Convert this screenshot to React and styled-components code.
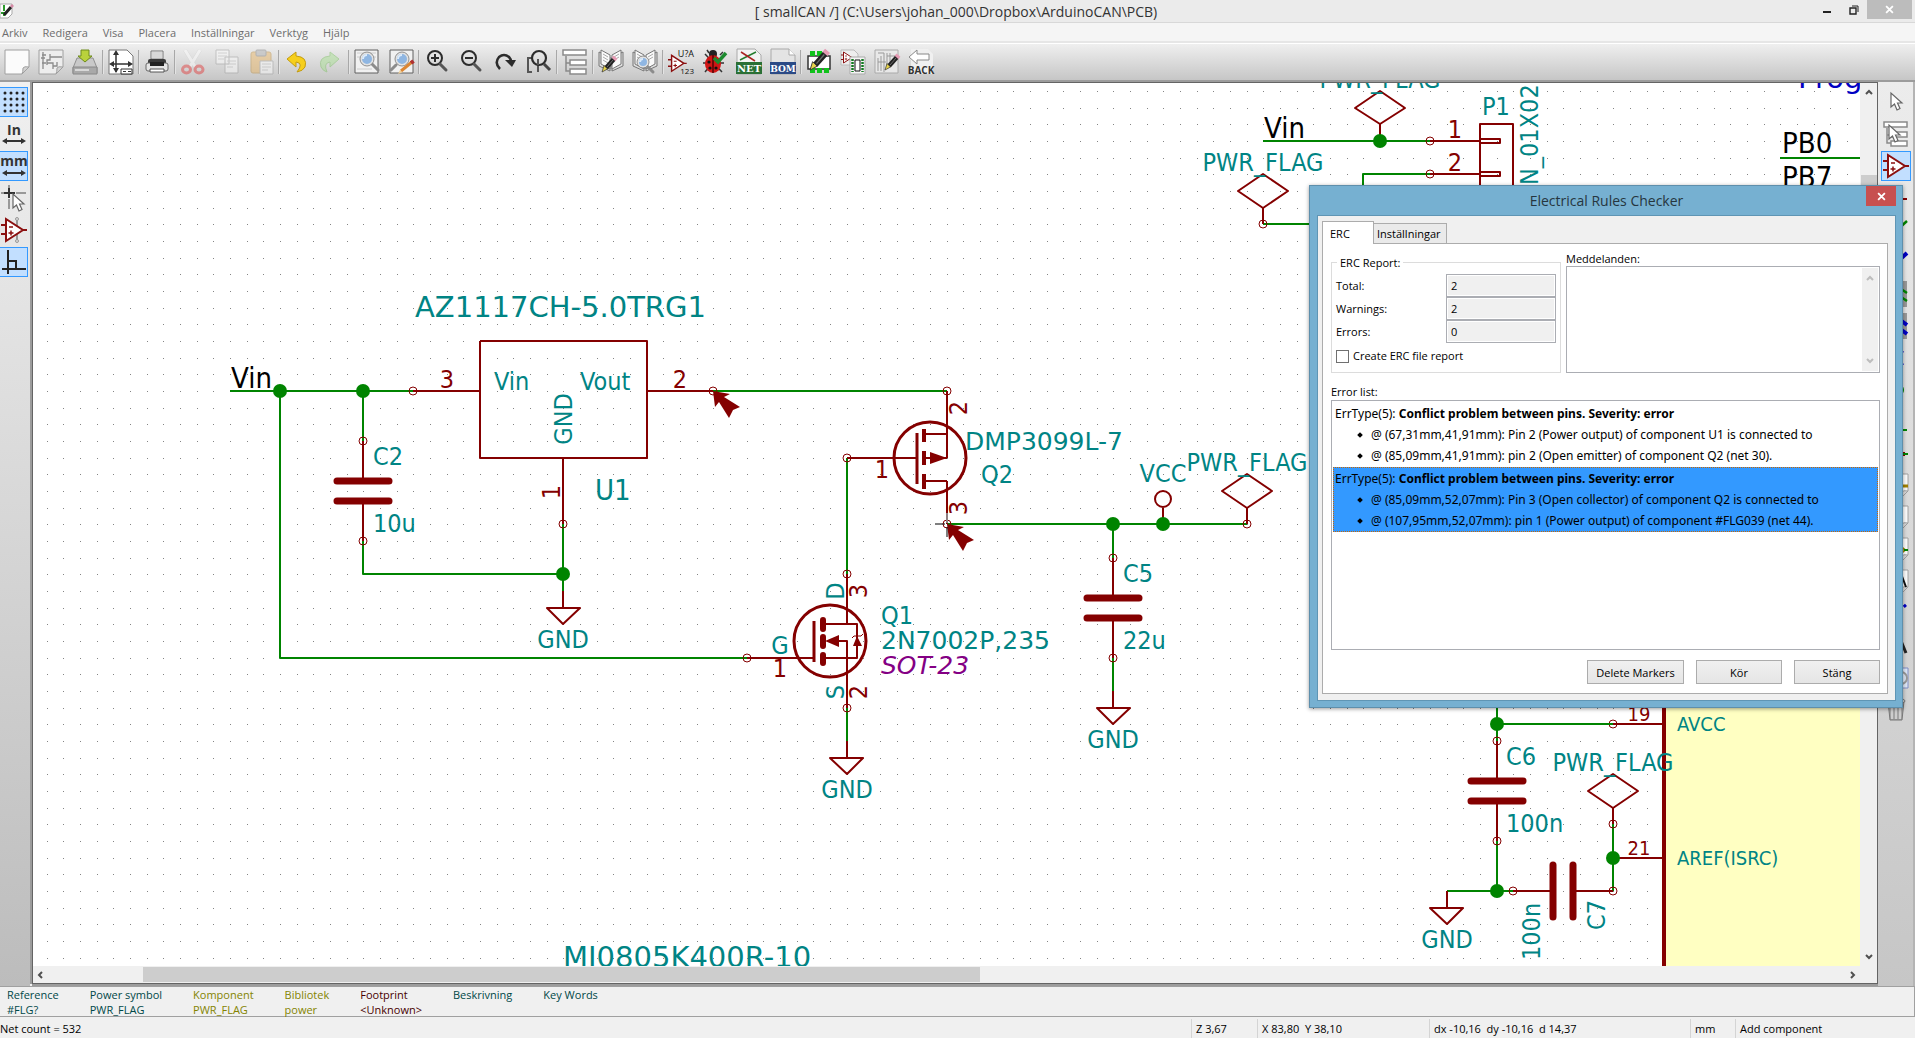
import React from "react";
import styled, { createGlobalStyle, css } from "styled-components";

const UI_FONT = `"Open Sans", "Noto Sans", sans-serif`;
const RED = "#840000";
const GREEN = "#008400";
const TEAL = "#008484";

const GlobalStyle = createGlobalStyle`
	* {
		box-sizing: border-box;
	}
	body {
		margin: 0;
		overflow: hidden;
		background: #f0f0f0;
		font-family: ${UI_FONT};
		font-size: 11px;
		color: #000;
	}
	button, input, textarea {
		font: inherit;
		color: inherit;
		margin: 0;
	}
`;

/* ---------- window frame ---------- */

const Window = styled.div`
	position: relative;
	display: flex;
	flex-direction: column;
	height: 100vh;
`;

const TitleBar = styled.header`
	display: grid;
	grid-template-columns: 1fr auto 1fr;
	height: 23px;
	padding-right: 3px;
	background: #ebebeb;
	border-bottom: 1px solid #d8d8d8;
`;

const Title = styled.h1`
	margin: 0;
	font-size: 14px;
	line-height: 23px;
	font-weight: 400;
	color: #333;
	white-space: pre;
`;

const WindowButtons = styled.div`
	display: flex;
	justify-content: flex-end;
`;

const WindowButton = styled.button`
	width: ${({ $wide }) => ($wide ? 45 : 27)}px;
	height: 19px;
	padding: 0;
	border: 0;
	display: flex;
	align-items: center;
	justify-content: center;
	background: ${({ $wide }) => ($wide ? "#bcbcbc" : "transparent")};
`;

const MenuBar = styled.nav`
	display: flex;
	gap: 15px;
	height: 20px;
	padding-left: 2px;
	background: #f5f5f5;
	border-bottom: 2px solid #e6e6e6;
`;

const MenuItem = styled.a`
	font-size: 11px;
	line-height: 20px;
	color: #6d6d6d;
	text-decoration: none;
`;

const Toolbar = styled.div`
	display: flex;
	align-items: center;
	height: 39px;
	border-top: 1px solid #fff;
	border-bottom: 2px solid #9c9c9c;
	background: linear-gradient(#efefef, #c6c6c6);
`;

const ToolButton = styled.button`
	width: 34px;
	height: 34px;
	padding: 0;
	border: 0;
	background: none;
	display: flex;
	align-items: center;
	justify-content: center;
	opacity: ${({ disabled }) => (disabled ? 0.45 : 1)};
`;

const Separator = styled.span`
	width: 2px;
	height: 24px;
	background: linear-gradient(90deg, #a8a8a8 50%, #e4e4e4 50%);
`;

const Work = styled.main`
	flex: 1;
	min-height: 0;
	display: flex;
`;

const SideBar = styled.div`
	display: flex;
	flex-direction: column;
	gap: 2px;
	overflow: hidden;
	width: ${({ $right }) => ($right ? 37 : 30)}px;
	padding: ${({ $right }) => ($right ? "5px 0 0 3px" : "5px 0 0 0")};
	border-right: ${({ $right }) => ($right ? "2px solid #b4b4b4" : "0")};
	background: ${({ $right }) =>
		$right
			? "linear-gradient(#ececec, #c6c6c6)"
			: "linear-gradient(#f0f0f0, #bcbcbc)"};
`;

const SideButton = styled.button`
	flex: none;
	width: ${({ $right }) => ($right ? 30 : 28)}px;
	height: 30px;
	padding: 0;
	display: flex;
	align-items: center;
	justify-content: center;
	background: none;
	border: 1px solid transparent;
	border-left-width: ${({ $right }) => ($right ? 1 : 0)}px;
	${({ $active }) =>
		$active &&
		css`
			background: #c2dfff;
			border-color: #3399ff;
		`}
`;

/* ---------- canvas ---------- */

const CanvasFrame = styled.section`
	flex: 1;
	min-width: 0;
	display: grid;
	grid-template-columns: minmax(0, 1fr) 17px;
	grid-template-rows: minmax(0, 1fr) 17px;
	background: #f0f0f0;
	border: 1px solid #646464;
	box-shadow: -2px 0 0 #9c9c9c, 0 2px 0 #9c9c9c;
	margin: 0 0 2px 2px;
`;

const Sheet = styled.svg`
	display: block;
	width: 100%;
	height: 100%;
	background: #fff;
`;

const VScroll = styled.div`
	display: flex;
	flex-direction: column;
	align-items: center;
	justify-content: space-between;
	padding: 5px 0;
`;

const VThumb = styled.span`
	width: 16px;
	height: 300px;
	margin: 79px 0 auto;
	background: #cdcdcd;
`;

const HScroll = styled.div`
	display: flex;
	align-items: center;
	padding: 0 4px;
`;

const HThumb = styled.span`
	width: 46%;
	height: 15px;
	margin: 0 auto 0 98px;
	background: #cdcdcd;
`;

/* ---------- bottom panels ---------- */

const MessagePanel = styled.dl`
	display: flex;
	gap: 31px;
	height: 31px;
	margin: 0;
	padding: 0 7px;
	background: #f0f0f0;
	border: 1px solid #a0a0a0;
	border-left: 0;
`;

const Message = styled.div`
	font-size: 11px;
	line-height: 15px;
	color: ${({ $color }) => $color};
	dd {
		margin: 0;
	}
`;

const StatusBar = styled.footer`
	display: grid;
	grid-template-columns: minmax(0, 1fr) 66px 172px 261px 45px 180px;
	height: 21px;
	padding-top: 2px;
`;

const StatusCell = styled.div`
	padding-left: ${({ $first }) => ($first ? 0 : 4)}px;
	border-left: ${({ $first }) => ($first ? "0" : "1px solid #d4d4d4")};
	font-size: 11px;
	line-height: 20px;
	white-space: pre;
`;

/* ---------- dialog ---------- */

const Dialog = styled.section`
	position: absolute;
	top: 185px;
	right: 12px;
	width: 594px;
	padding: 0 6px 6px 7px;
	background: #76b0d1;
	border: 1px solid #5e8fac;
	box-shadow: 0 1px 4px rgba(0, 0, 0, 0.4);
`;

const DialogHeader = styled.header`
	display: grid;
	grid-template-columns: 30px 1fr 30px;
	height: 29px;
`;

const DialogTitle = styled.h2`
	margin: 0;
	text-align: center;
	font-size: 14px;
	line-height: 29px;
	font-weight: 400;
	color: #26363f;
`;

const DialogClose = styled.button`
	width: 30px;
	height: 20px;
	padding: 0;
	border: 0;
	display: flex;
	align-items: center;
	justify-content: center;
	background: #c75050;
`;

const DialogBody = styled.div`
	padding: 5px 7px 6px 4px;
	background: #f0f0f0;
	border: 1px solid #5f95b4;
`;

const Tabs = styled.div`
	display: flex;
	align-items: flex-end;
`;

const Tab = styled.button`
	height: ${({ $active }) => ($active ? 23 : 20)}px;
	width: ${({ $active }) => ($active ? 52 : 73)}px;
	margin-bottom: ${({ $active }) => ($active ? -1 : 0)}px;
	padding: 0 ${({ $active }) => ($active ? 7 : 3)}px;
	text-align: left;
	font-size: 11px;
	white-space: nowrap;
	background: ${({ $active }) => ($active ? "#fff" : "#eaeaea")};
	border: 1px solid #acacac;
	border-bottom: 0;
	border-left-width: ${({ $active }) => ($active ? 1 : 0)}px;
`;

const TabPage = styled.div`
	padding: 7px 7px 9px 8px;
	background: #fff;
	border: 1px solid #acacac;
`;

const Summary = styled.div`
	display: grid;
	grid-template-columns: 230px 1fr;
	column-gap: 5px;
	height: 122px;
`;

const Report = styled.fieldset`
	height: 119px;
	margin: 3px 0 0;
	padding: 3px 4px 0;
	border: 1px solid #dcdcdc;
	legend {
		margin-left: 1px;
		padding: 0 3px;
		font-size: 11px;
		line-height: 17px;
	}
`;

const ReportRow = styled.div`
	display: flex;
	justify-content: space-between;
	align-items: center;
	height: 23px;
`;

const ReportValue = styled.input`
	width: 110px;
	height: 23px;
	padding: 0 4px;
	font-size: 11px;
	background: #f0f0f0;
	border: 1px solid #abadb3;
	box-shadow: inset 0 0 0 1px #fff;
`;

const CheckRow = styled.label`
	display: flex;
	align-items: center;
	gap: 4px;
	margin-top: 5px;
	line-height: 16px;
`;

const CheckBox = styled.input`
	appearance: none;
	width: 13px;
	height: 13px;
	background: #fff;
	border: 1px solid #707070;
`;

const Messages = styled.div`
	display: flex;
	flex-direction: column;
	label {
		height: 15px;
		line-height: 15px;
	}
`;

const MessageBox = styled.div`
	flex: 1;
	display: flex;
	padding: 1px;
	border: 1px solid #abadb3;
`;

const MessageText = styled.textarea`
	flex: 1;
	resize: none;
	border: 0;
	padding: 2px;
	overflow: hidden;
`;

const MessageScroll = styled.div`
	width: 16px;
	display: flex;
	flex-direction: column;
	align-items: center;
	justify-content: space-between;
	padding: 6px 0;
	background: #f0f0f0;
`;

const ListLabel = styled.h3`
	margin: 10px 0 0;
	font-size: 11px;
	line-height: 17px;
	font-weight: 400;
`;

const ErrorList = styled.ul`
	height: 250px;
	margin: 0;
	padding: 1px;
	list-style: none;
	border: 1px solid #abadb3;
`;

const ErrorItem = styled.li`
	height: 65px;
	padding: 0 1px;
	font-family: "Noto Sans", "Open Sans", sans-serif;
	font-size: 12px;
	line-height: 21px;
	white-space: nowrap;
	border: 1px dotted ${({ $selected }) => ($selected ? "#cc6600" : "transparent")};
	background: ${({ $selected }) => ($selected ? "#3399ff" : "#fff")};
	ul {
		margin: 0;
		padding: 0;
		list-style: none;
	}
	li {
		display: flex;
		align-items: center;
		gap: 9px;
		padding-left: 23px;
	}
	li::before {
		content: "";
		width: 4px;
		height: 4px;
		background: #000;
		transform: rotate(45deg);
	}
`;

const DialogButtons = styled.div`
	display: flex;
	justify-content: flex-end;
	gap: 12px;
	padding-top: 10px;
`;

const DialogButton = styled.button`
	width: ${({ $wide }) => ($wide ? 97 : 86)}px;
	height: 24px;
	padding: 0;
	font-size: 11px;
	background: linear-gradient(#f0f0f0, #e5e5e5);
	border: 1px solid #acacac;
`;

/* ---------- icons ---------- */

const Icon = ({ children }) => (
	<svg width="26" height="26" viewBox="0 0 26 26" fill="none" overflow="visible">
		{children}
	</svg>
);

const Chevron = ({ d, color = "#505050" }) => (
	<svg width="8" height="8" viewBox="0 0 8 8" fill="none">
		<path d={d} stroke={color} strokeWidth="2" />
	</svg>
);

const UP = "M1 6L4 3L7 6";
const DOWN = "M1 2L4 5L7 2";

const Cross = ({ size = 9 }) => (
	<svg width={size} height={size} viewBox="0 0 8 8">
		<path d="M1 1L7 7M7 1L1 7" stroke="#fff" strokeWidth="1.6" />
	</svg>
);

const Lens = ({ x, y, r, flip }) => (
	<g>
		<path
			d={flip ? `M${x - r} ${y + r}l-5 5` : `M${x + r - 1} ${y + r - 1}l6 6`}
			stroke="#8c8c8c"
			strokeWidth="3"
			strokeLinecap="round"
		/>
		<circle cx={x} cy={y} r={r} fill="#8fb6e2" stroke="#e2e2e2" strokeWidth="2" />
		<circle cx={x} cy={y} r={r + 1} stroke="#7a7a7a" strokeWidth=".8" />
		<path
			d={`M${x - r + 2} ${y}a${r - 2} ${r - 2} 0 0 1 ${r - 2} ${2 - r}`}
			stroke="#dcebfa"
			strokeWidth="2"
		/>
	</g>
);

const Pencil = ({ x = 0, y = 0, body = "#222" }) => (
	<g transform={`translate(${x} ${y})`}>
		<path d="M4 13L12 4" stroke={body} strokeWidth="4.5" />
		<path d="M5 12L11 5" stroke="#6c6c6c" strokeWidth="1" />
		<path d="M2 10.500L5.500 14L0 17Z" fill="#e8d44a" stroke="#333" strokeWidth=".7" />
		<path d="M11.500 4.500L13.500 2.200" stroke="#e59bb4" strokeWidth="5" />
	</g>
);

const OpAmp = ({ x = 0, y = 0, s = 1 }) => (
	<g transform={`translate(${x} ${y}) scale(${s})`}>
		<path d="M5 2V24L22 13Z" fill="#fff" stroke="#8b1010" strokeWidth="2" />
		<path d="M0 8H5M0 17H5M22 13H26" stroke="#8b1010" strokeWidth="2" />
		<path d="M8 10H12M7.500 16H12.500M10 13.500V18.500" stroke="#8b1010" strokeWidth="1.500" />
	</g>
);

const Page = ({ fill = "#fbfbfb" }) => (
	<path
		d="M1 1H25V18L18 25H1ZM25 18Q20 17 19 19Q19 23 18 25"
		fill={fill}
		stroke="#a0a0a0"
	/>
);

const Book = () => (
	<g stroke="#777" strokeWidth="1">
		<path d="M1 3L12 8V22L1 17ZM25 3L14 8V22L25 17Z" fill="#dedede" />
		<path d="M3 1L12 6V20L3 15ZM23 1L14 6V20L23 15Z" fill="#fafafa" />
		<path d="M5 5L10 8M5 8L10 11M5 11L10 14M21 5L16 8M21 8L16 11" stroke="#aaa" />
	</g>
);

const PointerArrow = ({ x = 0, y = 0 }) => (
	<path
		transform={`translate(${x} ${y})`}
		d="M1 1V15L4.500 12L7 18L10 16.500L7.500 11H12Z"
		fill="#fff"
		stroke="#666"
		strokeWidth="1.200"
	/>
);

const TreeBoxes = () => (
	<g stroke="#8a8a8a" strokeWidth="1.500">
		<path d="M4 7V22H9M4 14H9" />
		<path d="M1 1H24V6H1ZM8 11H24V16H8ZM8 20H24V25H8Z" fill="#fff" />
	</g>
);

const Magnifier = ({ children }) => (
	<>
		<circle cx="11" cy="9" r="7" stroke="#2c2c2c" strokeWidth="2" />
		<path d="M16 15L22 21" stroke="#555" strokeWidth="3" strokeLinecap="round" />
		{children}
	</>
);

const IconText = styled.text`
	font-family: ${({ $serif }) => ($serif ? `"DejaVu Serif", serif` : UI_FONT)};
	font-size: ${({ $size }) => $size}px;
	font-weight: ${({ $bold }) => ($bold ? 700 : 400)};
	text-anchor: ${({ $end }) => ($end ? "end" : "middle")};
`;

const TOOLS = [
	{ name: "New schematic", icon: <Page /> },
	{
		name: "Open schematic",
		icon: (
			<>
				<Page fill="#ededed" />
				<path
					d="M4 6H8M5 3V20M12 5V11H9V16M12 8H24M4 14H8M9 14H15V20M15 17H19V13M3 9H7"
					stroke="#8a8a8a"
					strokeWidth="1.300"
				/>
			</>
		)
	},
	{
		name: "Save project",
		icon: (
			<>
				<path d="M5 9H21L25 19V24H1V19Z" fill="#c9c9c9" stroke="#909090" />
				<path d="M1 18H25V25H1Z" fill="#a9a9a9" stroke="#888" />
				<path d="M3 21H17" stroke="#d8d8d8" strokeWidth="2" />
				<path d="M9 1H17V7H20L13 13L6 7H9Z" fill="#b9d23c" stroke="#6f8c1c" />
			</>
		),
		end: true
	},
	{
		name: "Page settings",
		icon: (
			<>
				<path d="M1 1H19L25 7V25H1Z" fill="#fff" stroke="#777" />
				<path d="M8 3V23M3 15H23" stroke="#333" strokeWidth="1.500" />
				<path
					d="M8 1L5 6H11ZM8 24L5 19H11ZM1 15L6 12V18ZM25 15L20 12V18Z"
					fill="#333"
				/>
				<path d="M13 20H24V25H13Z" fill="#fff" stroke="#333" />
				<path d="M15 22.500H18M20 22.500H23" stroke="#333" />
			</>
		),
		end: true
	},
	{
		name: "Print",
		icon: (
			<>
				<path d="M7 2H19V10H7Z" fill="#f6f6f6" stroke="#777" />
				<path d="M8 4H18M8 6H18M8 8H18" stroke="#bbb" />
				<rect x="4" y="10" width="18" height="7" rx="2" fill="#3a3a3a" />
				<rect x="2" y="14" width="22" height="8" rx="2" fill="#e4e4e4" stroke="#666" />
				<path d="M6 13H20V17H6Z" fill="#222" />
				<path d="M6 20H20V23H6Z" fill="#fff" stroke="#555" />
			</>
		),
		end: true
	},
	{
		name: "Cut",
		disabled: true,
		icon: (
			<>
				<path d="M5 1L16 19M20 1L9 19" stroke="#d0d0d0" strokeWidth="4" />
				<path d="M5 1L16 19M20 1L9 19" stroke="#fff" strokeWidth="3" />
				<ellipse cx="6.500" cy="20.500" rx="4" ry="3.500" stroke="#e23434" strokeWidth="3" />
				<ellipse cx="19" cy="20.500" rx="4" ry="3.500" stroke="#e23434" strokeWidth="3" />
			</>
		)
	},
	{
		name: "Copy",
		disabled: true,
		icon: (
			<>
				<path d="M2 1H15V15H2ZM11 8H24V24H11Z" fill="#fff" stroke="#999" />
				<path d="M4 4H13M4 7H13M4 10H10M13 12H22M13 15H22M13 18H19" stroke="#bbb" />
			</>
		)
	},
	{
		name: "Paste",
		disabled: true,
		icon: (
			<>
				<rect x="3" y="3" width="20" height="21" rx="2" fill="#eab25c" stroke="#b98936" />
				<rect x="8" y="1" width="10" height="6" rx="1" fill="#aaa" stroke="#777" />
				<path d="M12 12H25V25H12Z" fill="#fff" stroke="#999" />
				<path d="M14 15H23M14 18H23M14 21H20" stroke="#bbb" />
			</>
		),
		end: true
	},
	{
		name: "Undo",
		icon: (
			<path
				d="M12 3V7Q24 8 21 18Q19 22 13 23Q20 14 12 13V18L3 10Z"
				fill="#f6cf1c"
				stroke="#c39c12"
			/>
		)
	},
	{
		name: "Redo",
		disabled: true,
		icon: (
			<path
				d="M12 3V7Q0 8 3 18Q5 22 9 23Q5 14 12 13V18L21 10Z"
				fill="#a4e08c"
				stroke="#74bd58"
			/>
		),
		end: true
	},
	{
		name: "Find",
		icon: (
			<>
				<path d="M1 1H24V24H1Z" fill="#f1f1f1" stroke="#606060" />
				<path d="M3 4H22M3 8H22M3 20H18" stroke="#ccc" />
				<Lens x={13} y={10} r={6} />
			</>
		)
	},
	{
		name: "Find and replace",
		icon: (
			<>
				<path d="M2 1H25V24H2Z" fill="#f1f1f1" stroke="#606060" />
				<Lens x={14} y={10} r={6} flip />
				<path d="M13 22L24 13" stroke="#dc8632" strokeWidth="3" />
				<path d="M23 14L25.500 12" stroke="#b03030" strokeWidth="4" />
				<path d="M10 25L12 21L14 23.500Z" fill="#eed09a" />
			</>
		),
		end: true
	},
	{
		name: "Zoom in",
		icon: (
			<Magnifier>
				<path d="M11 5V13M7 9H15" stroke="#2c2c2c" strokeWidth="2" />
			</Magnifier>
		)
	},
	{
		name: "Zoom out",
		icon: (
			<Magnifier>
				<path d="M7 9H15" stroke="#2c2c2c" strokeWidth="2" />
			</Magnifier>
		)
	},
	{
		name: "Redraw",
		icon: (
			<>
				<path d="M8 20Q2 14 7 8Q12 4 17 8Q19 10 19 13" stroke="#2c2c2c" strokeWidth="2.500" />
				<path d="M13 11H24L20 18Z" fill="#2c2c2c" />
			</>
		)
	},
	{
		name: "Zoom to fit",
		icon: (
			<>
				<path d="M6 9H2V23H6M12 16V23" stroke="#555" strokeWidth="2" />
				<circle cx="13" cy="9" r="7" stroke="#2c2c2c" strokeWidth="2.200" />
				<path d="M18 15L24 21" stroke="#444" strokeWidth="3" />
				<path d="M12 10V16" stroke="#555" strokeWidth="2" />
			</>
		),
		end: true
	},
	{ name: "Hierarchy", icon: <TreeBoxes />, end: true },
	{
		name: "Library editor",
		icon: (
			<>
				<Book />
				<Pencil x={4} y={6} />
			</>
		)
	},
	{
		name: "Library browser",
		icon: (
			<>
				<Book />
				<Lens x={11} y={13} r={5} />
			</>
		),
		end: true
	},
	{
		name: "Annotate",
		icon: (
			<>
				<OpAmp x={0} y={5} s={0.72} />
				<IconText x="26" y="8" fill="#111" $size={9} $end>
					U?A
				</IconText>
				<IconText x="26" y="25" fill="#111" $size={8} $end>
					123
				</IconText>
			</>
		)
	},
	{
		name: "Electrical rules check",
		icon: (
			<>
				<path d="M3 5L20 23M3 23L8 17M1 14H22M18 6L21 3M7 4L5 1" stroke="#333" strokeWidth="1.500" />
				<circle cx="11" cy="5" r="4" fill="#222" />
				<ellipse cx="11" cy="15" rx="8" ry="9" fill="#d01515" />
				<path d="M11 6V24" stroke="#300" strokeWidth="1.200" />
				<circle cx="7" cy="13" r="1.600" fill="#111" />
				<circle cx="8" cy="19" r="1.600" fill="#111" />
				<circle cx="14" cy="19" r="1.600" fill="#111" />
				<path d="M12 9L16 13L24 4" stroke="#1c8a2e" strokeWidth="3.500" />
			</>
		)
	},
	{
		name: "Generate netlist",
		icon: (
			<>
				<path d="M1 0H19L25 6V25H1Z" fill="#f3f3f3" stroke="#aaa" />
				<path d="M4 11L20 3" stroke="#267b2e" strokeWidth="1.500" />
				<path d="M5 3L19 12" stroke="#a22" strokeWidth="1.500" />
				<path d="M0 13H26V25H0Z" fill="#2a7035" />
				<IconText x="13" y="23" fill="#fff" $size={10} $bold $serif>
					NET
				</IconText>
			</>
		)
	},
	{
		name: "Bill of materials",
		icon: (
			<>
				<path d="M1 0H19L25 6V25H1Z" fill="#e4e4e4" stroke="#aaa" />
				<path d="M19 0V6H25" fill="#fff" stroke="#aaa" />
				<path d="M0 13H26V25H0Z" fill="#2b4a86" />
				<IconText x="13" y="23" fill="#fff" $size={9} $bold $serif>
					BOM
				</IconText>
			</>
		),
		end: true
	},
	{
		name: "Footprint editor",
		icon: (
			<>
				<path d="M2 7H24V20H2Z" fill="#fff" stroke="#333" strokeWidth="1.500" />
				<path
					d="M4 2H9V7H4ZM11 2H16V7H11ZM4 19H9V24H4ZM11 19H16V24H11ZM18 19H23V24H18Z"
					fill="#10c21c"
				/>
				<g transform="translate(4 -1) scale(1.300)">
					<Pencil />
				</g>
			</>
		)
	},
	{
		name: "Assign footprints",
		icon: (
			<>
				<path d="M1 1H14L18 5V16H1Z" fill="#eee" stroke="#bbb" />
				<OpAmp x={1} y={2} s={0.5} />
				<path d="M10 8H25V25H10Z" fill="#f4f4f4" stroke="#aaa" />
				<path d="M15 11H20V22H15Z" fill="#fff" stroke="#111" />
				<path d="M12.500 10V23M22.500 10V23" stroke="#127a20" strokeWidth="2.500" strokeDasharray="2 1" />
			</>
		)
	},
	{
		name: "Board editor",
		icon: (
			<>
				<path d="M1 1H24V24H1Z" fill="#e8e8e8" stroke="#aaa" />
				<path d="M4 4H10V23M7 7V22M4 9V22M13 4V20M16 4V18M4 13H12M13 7H22" stroke="#999" />
				<Pencil x={11} y={4} />
			</>
		)
	},
	{
		name: "Back",
		icon: (
			<>
				<path d="M3 0H20L25 5V25H3Z" fill="#f0f0f0" />
				<path d="M9 1L1 8L9 15V11H21V5H9Z" fill="#fff" stroke="#888" />
				<IconText x="13" y="25" fill="#333" $size={10} $bold>
					BACK
				</IconText>
			</>
		)
	}
];

const DimensionArrow = () => (
	<path d="M1 20L6 17V19H20V17L25 20L20 23V21H6V23Z" fill="#333" />
);

const GRID_DOTS = [4, 10, 16, 22]
	.map(y => [4, 10, 16, 22].map(x => `M${x} ${y}h0`).join(""))
	.join("");

const LEFT_TOOLS = [
	{
		name: "Grid",
		active: true,
		icon: <path d={GRID_DOTS} stroke="#222" strokeWidth="3" strokeLinecap="round" />
	},
	{
		name: "Inches",
		icon: (
			<>
				<IconText x="13" y="14" fill="#333" $size={14} $bold>
					In
				</IconText>
				<DimensionArrow />
			</>
		)
	},
	{
		name: "Millimetres",
		active: true,
		icon: (
			<>
				<IconText x="13" y="13" fill="#333" $size={14} $bold>
					mm
				</IconText>
				<DimensionArrow />
			</>
		)
	},
	{
		name: "Cursor shape",
		icon: (
			<>
				<path d="M0 8H5M15 8H25M8 0V3M8 14V24" stroke="#999" strokeWidth="2" />
				<path d="M3 8H14M8 3V13" stroke="#333" strokeWidth="2" />
				<PointerArrow x={11} y={8} />
			</>
		)
	},
	{
		name: "Hidden pins",
		icon: (
			<>
				<path d="M16 3V23" stroke="#999" strokeWidth="2" />
				<circle cx="16" cy="2" r="1.500" fill="#ddd" stroke="#999" />
				<circle cx="16" cy="24" r="1.500" fill="#ddd" stroke="#999" />
				<OpAmp />
			</>
		)
	},
	{
		name: "Orthogonal wires",
		active: true,
		icon: <path d="M7 1V25M1 20H25M7 12H15V20" stroke="#222" strokeWidth="2" />
	}
];

const RIGHT_TOOLS = [
	{ name: "Select", icon: <PointerArrow x={7} y={3} /> },
	{
		name: "Navigate hierarchy",
		icon: (
			<>
				<TreeBoxes />
				<PointerArrow x={5} y={3} />
			</>
		)
	},
	{ name: "Place component", active: true, icon: <OpAmp /> },
	{ name: "Place power port", icon: <path d="M15 14H24" stroke={RED} strokeWidth="2" /> },
	{ name: "Place wire", icon: <path d="M3 23L24 4" stroke={GREEN} strokeWidth="2.500" /> },
	{ name: "Place bus", icon: <path d="M3 23L24 4" stroke="#0000c2" strokeWidth="4" /> },
	{
		name: "Wire to bus entry",
		icon: (
			<>
				<path d="M22 0V26" stroke="#999" strokeWidth="4" />
				<path d="M12 4L24 12M12 12L24 20" stroke={GREEN} strokeWidth="2.500" />
			</>
		)
	},
	{
		name: "Bus to bus entry",
		icon: (
			<>
				<path d="M22 0V26" stroke="#999" strokeWidth="4" />
				<path d="M12 3L24 12M12 12L24 21" stroke="#0000c2" strokeWidth="4" />
			</>
		)
	},
	{
		name: "No connect",
		icon: <path d="M8 6L20 20M20 6L8 20" stroke="#0000c2" strokeWidth="2.500" />
	},
	{ name: "Junction", icon: <circle cx="15" cy="13" r="6" fill={GREEN} /> },
	{ name: "Net label", icon: <path d="M3 21H24" stroke={GREEN} strokeWidth="2" /> },
	{
		name: "Global label",
		icon: (
			<>
				<path d="M3 13H22" stroke={RED} strokeWidth="4" />
				<path d="M20 13H25" stroke={GREEN} strokeWidth="2" />
			</>
		)
	},
	{
		name: "Hierarchical label",
		icon: (
			<>
				<Page />
				<path d="M20 13H25" stroke="#a08000" strokeWidth="3" />
			</>
		)
	},
	{ name: "Hierarchical sheet", icon: <Page /> },
	{
		name: "Import sheet pin",
		icon: (
			<>
				<Page />
				<path d="M16 8L22 13L16 18" stroke="#a08000" strokeWidth="2" />
				<path d="M21 13H25" stroke={GREEN} strokeWidth="2" />
			</>
		)
	},
	{
		name: "Sheet pin",
		icon: (
			<>
				<Page />
				<path d="M16 20L20 10L23 18" stroke="#111" strokeWidth="2" />
			</>
		)
	},
	{
		name: "Graphic line",
		icon: <path d="M3 22L25 2" stroke="#0000c2" strokeWidth="3" strokeDasharray="3 3" />
	},
	{ name: "Text", icon: <path d="M13 20L18 8L23 20" stroke="#222" strokeWidth="3" /> },
	{
		name: "Image",
		icon: (
			<>
				<path d="M1 3H25V23H1Z" fill="#dde6f6" stroke="#7e8cc4" />
				<circle cx="18" cy="13" r="6" stroke="#999" strokeWidth="2" />
			</>
		)
	},
	{
		name: "Delete",
		icon: (
			<>
				<path d="M5 4H21L19 23H7Z" fill="#a4a4a4" stroke="#777" />
				<path d="M9 6V22M13 6V22M17 6V22" stroke="#dcdcdc" strokeWidth="1.500" />
				<ellipse cx="13" cy="4" rx="9" ry="3" fill="#c8c8c8" stroke="#777" />
			</>
		)
	}
];

/* ---------- schematic ---------- */

// The sheet is drawn in 50 mil grid steps
const STEP = 16.667;
const X = n => Math.round(13.8 + n * STEP);
const Y = n => Math.round(8 + n * STEP);

const gridPath = () => {
	let d = "";
	for (let i = 0; i < 160; i++) {
		for (let j = 0; j < 90; j++) d += `M${X(i)} ${Y(j)}h1`;
	}
	return d;
};
const GRID = gridPath();

const line = points =>
	points.map(([x, y], i) => `${i ? "L" : "M"}${X(x)} ${Y(y)}`).join("");

const Lines = styled.path`
	fill: none;
	stroke: ${({ $color }) => $color};
	stroke-width: ${({ $width = 2 }) => $width}px;
	stroke-linecap: ${({ $round }) => ($round ? "round" : "butt")};
	stroke-linejoin: round;
`;

const Circle = styled.circle`
	fill: ${({ $fill }) => $fill || "none"};
	stroke: ${RED};
	stroke-width: ${({ $width = 1 }) => $width}px;
`;

const LabelText = styled.text`
	font-family: ${({ $wide }) =>
		$wide
			? `"DejaVu Sans", sans-serif`
			: `"DejaVu Sans Condensed", "DejaVu Sans", sans-serif`};
	font-size: ${({ $size }) => $size}px;
	font-style: ${({ $italic }) => ($italic ? "italic" : "normal")};
	font-weight: 400;
	fill: ${({ $color }) => $color};
	text-anchor: ${({ $anchor }) => $anchor};
`;

const SIZES = { small: 20, normal: 25, large: 29 };

// x and y are sheet pixels of the base line, "up" turns the text to read upwards
const Label = ({ x, y, up, size = "normal", color = TEAL, anchor = "start", wide, italic, children }) => (
	<LabelText
		transform={`translate(${x} ${y})${up ? " rotate(-90)" : ""}`}
		$size={SIZES[size]}
		$color={color}
		$anchor={anchor}
		$wide={wide}
		$italic={italic}
	>
		{children}
	</LabelText>
);

const Wire = ({ points }) => <Lines d={line(points)} $color={GREEN} />;
const Part = ({ points }) => <Lines d={line(points)} $color={RED} />;
const PinEnd = ({ at }) => <Circle cx={X(at[0])} cy={Y(at[1])} r="4" />;
const Junction = ({ at }) => <circle cx={X(at[0])} cy={Y(at[1])} r="7" fill={GREEN} />;

const Ground = ({ x, y }) => (
	<>
		<Part points={[[x, y], [x, y + 1], [x - 1, y + 1], [x, y + 2], [x + 1, y + 1], [x, y + 1]]} />
		<Label x={X(x)} y={Y(y) + 57} anchor="middle">
			GND
		</Label>
	</>
);

const PowerFlag = ({ x, y }) => (
	<>
		<Part points={[[x, y], [x, y - 1], [x - 1.5, y - 2], [x, y - 3], [x + 1.5, y - 2], [x, y - 1]]} />
		<Label x={X(x)} y={Y(y) - 53} anchor="middle">
			PWR_FLAG
		</Label>
	</>
);

const Capacitor = ({ x, y, flat }) => (
	<g transform={`translate(${X(x)} ${Y(y)})${flat ? " rotate(-90)" : ""}`}>
		<Lines d="M0 -50V-10M0 10V50" $color={RED} />
		<Lines d="M-26 -10H26M-26 10H26" $color={RED} $width={7} $round />
		<Circle cy="-50" r="4" />
		<Circle cy="50" r="4" />
	</g>
);

const Marker = ({ at }) => (
	<path
		transform={`translate(${X(at[0])} ${Y(at[1])})`}
		d="M0 0L17 3L11 6L27 16L20 19L16 27L6 11L2 16Z"
		fill={RED}
	/>
);

const Regulator = () => (
	<>
		<Part points={[[26, 15], [36, 15], [36, 22], [26, 22], [26, 15]]} />
		<Part points={[[22, 18], [26, 18]]} />
		<Part points={[[36, 18], [40, 18]]} />
		<Part points={[[31, 22], [31, 26]]} />
		<PinEnd at={[22, 18]} />
		<PinEnd at={[40, 18]} />
		<PinEnd at={[31, 26]} />
		<Label x={382} y={234} size="large" wide>
			AZ1117CH-5.0TRG1
		</Label>
		<Label x={461} y={307}>Vin</Label>
		<Label x={547} y={307}>Vout</Label>
		<Label x={539} y={336} up anchor="middle">GND</Label>
		<Label x={562} y={417} size="large">U1</Label>
		<Label x={414} y={305} color={RED} anchor="middle">3</Label>
		<Label x={647} y={305} color={RED} anchor="middle">2</Label>
		<Label x={527} y={409} color={RED} anchor="middle" up>1</Label>
	</>
);

const PMos = () => (
	<>
		<Circle cx={X(53)} cy={Y(22)} r="36" $width={3} />
		<Part points={[[48, 22], [52.2, 22]]} />
		<Lines d="M884 350V401" $color={RED} $width={3} />
		<Lines d="M891 346V359M891 368V382M891 391V406" $color={RED} $width={4} />
		<Lines d="M891 351H914M891 375H914M891 398H914M914 308V375M914 398V441" $color={RED} />
		<path d="M897 369V381L914 375Z" fill={RED} />
		<PinEnd at={[48, 22]} />
		<PinEnd at={[54, 18]} />
		<PinEnd at={[54, 26]} />
		<Label x={934} y={325} color={RED} anchor="middle" up>2</Label>
		<Label x={934} y={425} color={RED} anchor="middle" up>3</Label>
		<Label x={849} y={395} color={RED} anchor="middle">1</Label>
		<Label x={932} y={367} wide>DMP3099L-7</Label>
		<Label x={948} y={400}>Q2</Label>
	</>
);

const NMos = () => (
	<>
		<Circle cx={X(47)} cy={Y(33)} r="36" $width={3} />
		<Part points={[[42, 34], [46, 34]]} />
		<Lines d="M781 538V579" $color={RED} $width={3} />
		<Lines d="M790 537V546M790 554V563M790 572V580" $color={RED} $width={6} $round />
		<Lines d="M814 491V541M790 541H824V575H790M800 558H814V625" $color={RED} />
		<path d="M792 558L806 552V564ZM820 563L824 553L829 563Z" fill={RED} />
		<Lines d="M819 555L821 553H828L830 551" $color={RED} $width={1} />
		<PinEnd at={[42, 34]} />
		<PinEnd at={[48, 29]} />
		<PinEnd at={[48, 37]} />
		<Label x={811} y={508} anchor="middle" up>D</Label>
		<Label x={834} y={508} color={RED} anchor="middle" up>3</Label>
		<Label x={811} y={609} anchor="middle" up>S</Label>
		<Label x={834} y={609} color={RED} anchor="middle" up>2</Label>
		<Label x={747} y={571} anchor="middle">G</Label>
		<Label x={747} y={594} color={RED} anchor="middle">1</Label>
		<Label x={848} y={541}>Q1</Label>
		<Label x={848} y={566} wide>2N7002P,235</Label>
		<Label x={848} y={591} color="#840084" wide italic>SOT-23</Label>
	</>
);

const Connector = () => (
	<>
		<Part points={[[86, 7], [86, 2], [88, 2], [88, 7]]} />
		<Part points={[[83, 3], [86, 3]]} />
		<Part points={[[83, 5], [86, 5]]} />
		<Lines d="M1447 56H1467V60H1447M1447 89H1467V93H1447" $color={RED} />
		<PinEnd at={[83, 3]} />
		<PinEnd at={[83, 5]} />
		<Label x={1422} y={55} color={RED} anchor="middle">1</Label>
		<Label x={1422} y={88} color={RED} anchor="middle">2</Label>
		<Label x={1449} y={32}>P1</Label>
		<Label x={1505} y={102} up>N_01X02</Label>
	</>
);

const Controller = () => (
	<>
		<rect x="1631" y="520" width="197" height="1600" fill="#ffffc2" />
		<Lines d="M1631 520V2120" $color={RED} $width={4} />
		<Part points={[[94, 38], [97, 38]]} />
		<Part points={[[94, 46], [97, 46]]} />
		<PinEnd at={[94, 38]} />
		<Label x={1606} y={638} size="small" color={RED} anchor="middle">19</Label>
		<Label x={1606} y={772} size="small" color={RED} anchor="middle">21</Label>
		<Label x={1644} y={648} size="small">AVCC</Label>
		<Label x={1644} y={782} size="small">AREF(ISRC)</Label>
	</>
);

const Schematic = () => (
	<Sheet role="img" aria-label="Schematic">
		<path d={GRID} stroke="#848484" shapeRendering="crispEdges" />
		<Controller />

		<Wire points={[[11, 18], [22, 18]]} />
		<Wire points={[[14, 18], [14, 34], [42, 34]]} />
		<Wire points={[[19, 18], [19, 21]]} />
		<Wire points={[[19, 27], [19, 29], [31, 29]]} />
		<Wire points={[[31, 26], [31, 30]]} />
		<Wire points={[[40, 18], [54, 18]]} />
		<Wire points={[[48, 22], [48, 29]]} />
		<Wire points={[[48, 37], [48, 39]]} />
		<Wire points={[[54, 26], [72, 26]]} />
		<Wire points={[[64, 26], [64, 28]]} />
		<Wire points={[[64, 34], [64, 36]]} />
		<Wire points={[[73, 3], [83, 3]]} />
		<Wire points={[[83, 5], [79, 5], [79, 9]]} />
		<Wire points={[[73, 8], [79, 8]]} />
		<Wire points={[[104, 4], [112, 4]]} />
		<Wire points={[[94, 38], [87, 38], [87, 39]]} />
		<Wire points={[[87, 35], [87, 38]]} />
		<Wire points={[[87, 45], [87, 48], [88, 48]]} />
		<Wire points={[[87, 48], [84, 48]]} />
		<Wire points={[[94, 48], [94, 44]]} />

		<Regulator />
		<PMos />
		<NMos />
		<Connector />
		<Capacitor x={19} y={24} />
		<Capacitor x={64} y={31} />
		<Capacitor x={87} y={42} />
		<Capacitor x={91} y={48} flat />
		<Ground x={31} y={30} />
		<Ground x={48} y={39} />
		<Ground x={64} y={36} />
		<Ground x={84} y={48} />
		<PowerFlag x={72} y={26} />
		<PowerFlag x={80} y={3} />
		<PowerFlag x={73} y={8} />
		<PowerFlag x={94} y={44} />
		<Part points={[[67, 26], [67, 25]]} />
		<Circle cx={X(67)} cy={Y(24.5)} r="8" $width={2} />
		<PinEnd at={[72, 26]} />
		<PinEnd at={[73, 8]} />
		<PinEnd at={[94, 44]} />

		<Junction at={[14, 18]} />
		<Junction at={[19, 18]} />
		<Junction at={[31, 29]} />
		<Junction at={[64, 26]} />
		<Junction at={[67, 26]} />
		<Junction at={[80, 3]} />
		<Junction at={[87, 38]} />
		<Junction at={[87, 48]} />
		<Junction at={[94, 46]} />

		<Label x={198} y={305} size="large" color="#000">Vin</Label>
		<Label x={1231} y={55} size="large" color="#000">Vin</Label>
		<Label x={1749} y={70} size="large" color="#000">PB0</Label>
		<Label x={1749} y={104} size="large" color="#000">PB7</Label>
		<Label x={1765} y={5} size="large" color="#0000c2" wide>Prog</Label>
		<Label x={340} y={382}>C2</Label>
		<Label x={340} y={449}>10u</Label>
		<Label x={1090} y={499}>C5</Label>
		<Label x={1090} y={566}>22u</Label>
		<Label x={1130} y={399} anchor="middle">VCC</Label>
		<Label x={1473} y={682}>C6</Label>
		<Label x={1473} y={749}>100n</Label>
		<Label x={1507} y={877} up>100n</Label>
		<Label x={1572} y={847} up>C7</Label>
		<Label x={530} y={884} size="large" wide>MI0805K400R-10</Label>

		<Marker at={[40, 18]} />
		<Marker at={[54, 26]} />
		<path d="M902 441H912M914 444V454" stroke="#000" strokeWidth="1" />
		<path d="M914 430V440" stroke="#9ff" strokeWidth="1" />
	</Sheet>
);

/* ---------- panels ---------- */

const MENUS = ["Arkiv", "Redigera", "Visa", "Placera", "Inställningar", "Verktyg", "Hjälp"];

const FIELDS = [
	{ label: "Reference", value: "#FLG?", color: "#004848" },
	{ label: "Power symbol", value: "PWR_FLAG", color: "#004848" },
	{ label: "Komponent", value: "PWR_FLAG", color: "#848400" },
	{ label: "Bibliotek", value: "power", color: "#848400" },
	{ label: "Footprint", value: "<Unknown>", color: "#480000" },
	{ label: "Beskrivning", value: "", color: "#004848" },
	{ label: "Key Words", value: "", color: "#004848" }
];

const STATUS = [
	"Net count = 532",
	"Z 3,67",
	"X 83,80  Y 38,10",
	"dx -10,16  dy -10,16  d 14,37",
	"mm",
	"Add component"
];

const ERRORS = [
	{
		pins: [
			"@ (67,31mm,41,91mm): Pin 2 (Power output) of component U1 is connected to",
			"@ (85,09mm,41,91mm): pin 2 (Open emitter) of component Q2 (net 30)."
		]
	},
	{
		selected: true,
		pins: [
			"@ (85,09mm,52,07mm): Pin 3 (Open collector) of component Q2 is connected to",
			"@ (107,95mm,52,07mm): pin 1 (Power output) of component #FLG039 (net 44)."
		]
	}
];

const TotalRow = ({ id, label, value }) => (
	<ReportRow>
		<label htmlFor={id}>{label}</label>
		<ReportValue id={id} type="text" value={value} readOnly />
	</ReportRow>
);

const ErcDialog = () => (
	<Dialog role="dialog" aria-labelledby="erc-title">
		<DialogHeader>
			<span />
			<DialogTitle id="erc-title">Electrical Rules Checker</DialogTitle>
			<DialogClose aria-label="Close">
				<Cross />
			</DialogClose>
		</DialogHeader>
		<DialogBody>
			<Tabs role="tablist">
				<Tab role="tab" $active>
					ERC
				</Tab>
				<Tab role="tab">Inställningar</Tab>
			</Tabs>
			<TabPage>
				<Summary>
					<Report>
						<legend>ERC Report:</legend>
						<TotalRow id="total" label="Total:" value="2" />
						<TotalRow id="warnings" label="Warnings:" value="2" />
						<TotalRow id="errors" label="Errors:" value="0" />
						<CheckRow>
							<CheckBox type="checkbox" />
							Create ERC file report
						</CheckRow>
					</Report>
					<Messages>
						<label htmlFor="messages">Meddelanden:</label>
						<MessageBox>
							<MessageText id="messages" readOnly />
							<MessageScroll>
								<Chevron d={UP} color="#bdbdbd" />
								<Chevron d={DOWN} color="#bdbdbd" />
							</MessageScroll>
						</MessageBox>
					</Messages>
				</Summary>
				<ListLabel>Error list:</ListLabel>
				<ErrorList>
					{ERRORS.map(({ pins, selected }) => (
						<ErrorItem key={pins[0]} $selected={selected}>
							ErrType(5): <b>Conflict problem between pins. Severity: error</b>
							<ul>
								{pins.map(pin => (
									<li key={pin}>{pin}</li>
								))}
							</ul>
						</ErrorItem>
					))}
				</ErrorList>
				<DialogButtons>
					<DialogButton $wide>Delete Markers</DialogButton>
					<DialogButton>Kör</DialogButton>
					<DialogButton>Stäng</DialogButton>
				</DialogButtons>
			</TabPage>
		</DialogBody>
	</Dialog>
);

const TitleIcon = () => (
	<svg width="14" height="20" viewBox="0 -3 14 20" fill="none">
		<path d="M0 1H12V11L8 15H0Z" fill="#fff" stroke="#aaa" />
		<path d="M4 2V8M1 10H4V13" stroke="#2c9a2c" strokeWidth="2" />
		<path d="M4 12L11 4" stroke="#222" strokeWidth="3" />
		<path d="M11 4L13 2" stroke="#d58aa6" strokeWidth="3" />
	</svg>
);

const App = () => (
	<>
		<GlobalStyle />
		<Window>
			<TitleBar>
				<TitleIcon />
				<Title>{"[ smallCAN /] (C:\\Users\\johan_000\\Dropbox\\ArduinoCAN\\PCB)"}</Title>
				<WindowButtons>
					<WindowButton aria-label="Minimize">
						<svg width="8" height="8" viewBox="0 0 8 8">
							<path d="M0 6H8" stroke="#222" strokeWidth="2" />
						</svg>
					</WindowButton>
					<WindowButton aria-label="Restore">
						<svg width="10" height="10" viewBox="0 0 10 10" fill="none">
							<path d="M1 3H7V9H1Z" stroke="#222" strokeWidth="1.400" />
							<path d="M3 1H9V7" stroke="#222" />
						</svg>
					</WindowButton>
					<WindowButton aria-label="Close" $wide>
						<Cross />
					</WindowButton>
				</WindowButtons>
			</TitleBar>
			<MenuBar>
				{MENUS.map(menu => (
					<MenuItem key={menu} href="#">
						{menu}
					</MenuItem>
				))}
			</MenuBar>
			<Toolbar>
				{TOOLS.map(({ name, icon, disabled, end }) => (
					<React.Fragment key={name}>
						<ToolButton aria-label={name} disabled={disabled}>
							<Icon>{icon}</Icon>
						</ToolButton>
						{end && <Separator />}
					</React.Fragment>
				))}
			</Toolbar>
			<Work>
				<SideBar>
					{LEFT_TOOLS.map(({ name, icon, active }) => (
						<SideButton key={name} aria-label={name} $active={active}>
							<Icon>{icon}</Icon>
						</SideButton>
					))}
				</SideBar>
				<CanvasFrame>
					<Schematic />
					<VScroll>
						<Chevron d={UP} />
						<VThumb />
						<Chevron d={DOWN} />
					</VScroll>
					<HScroll>
						<Chevron d="M5 1L2 4L5 7" />
						<HThumb />
						<Chevron d="M3 1L6 4L3 7" />
					</HScroll>
				</CanvasFrame>
				<SideBar $right>
					{RIGHT_TOOLS.map(({ name, icon, active }) => (
						<SideButton key={name} aria-label={name} $active={active} $right>
							<Icon>{icon}</Icon>
						</SideButton>
					))}
				</SideBar>
			</Work>
			<MessagePanel>
				{FIELDS.map(({ label, value, color }) => (
					<Message key={label} $color={color}>
						<dt>{label}</dt>
						<dd>{value}</dd>
					</Message>
				))}
			</MessagePanel>
			<StatusBar>
				{STATUS.map((text, i) => (
					<StatusCell key={text} $first={i === 0}>
						{text}
					</StatusCell>
				))}
			</StatusBar>
			<ErcDialog />
		</Window>
	</>
);

export default App;
